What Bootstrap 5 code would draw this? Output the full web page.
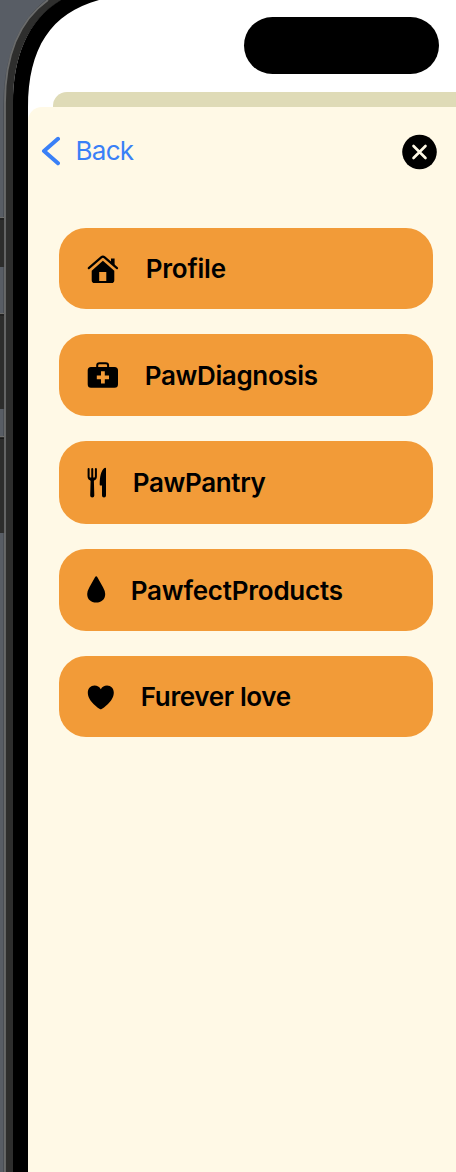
<!DOCTYPE html>
<html lang="en">
<head>
<meta charset="utf-8">
<meta name="viewport" content="width=device-width, initial-scale=1">
<title>Menu</title>
<link href="https://cdn.jsdelivr.net/npm/bootstrap@5.3.0/dist/css/bootstrap.min.css" rel="stylesheet">
<style>
body{font-family:Inter,"Liberation Sans",sans-serif;background:#fff;height:1172px}
.device{height:1172px}
.bezel{z-index:2;pointer-events:none}
.screen{margin-left:28px;height:1172px}
.status-area{height:92px;padding:17px 17px 0 0}
.island{width:195px;height:57px;background:#000}
.sheet-behind{height:15px;margin-left:25px;background:#dfdbb7;border-top-left-radius:14px}
.sheet-wrap{background:#fff}
.sheet{background:#fff9e6;border-top-left-radius:14px}
.sheet-bar{height:121px;padding:27px 19px 0 12px}
.back-link{color:#3a80f7;font-size:26px;line-height:34px;letter-spacing:-.7px}
.back-link span{margin-left:15.500px}
.menu-list{display:grid;grid-template-rows:81px 82px 83px 82px 81px;row-gap:25px;padding:0 22.600px 0 31.300px}
.menu-item{background:#f29b38;border:0;border-radius:27px;font-size:26px;font-weight:600;line-height:32px;color:#000;padding:0 0 0 27.500px;letter-spacing:-.36px}
.menu-item span{padding-top:1.500px}
.fit-wide{letter-spacing:-.23px}
</style>
</head>
<body>
<main class="device position-relative overflow-hidden">
  <svg class="bezel position-absolute top-0 start-0" width="110" height="1172" viewBox="0 0 110 1172" aria-hidden="true">
    <path d="M0 0H50C22 20 5 55 5 103V1172H0Z" fill="#585d65"/>
    <path d="M3.500 1172V110C3.500 55 20 20 46 0" fill="none" stroke="#4a4e54"/>
    <g fill="#2d2d2c">
      <path d="M0 218H5V267H0zM0 313H5V409H0zM0 437H5V533H0z"/>
      <path d="M0 217.500H4M0 313.500H4M0 436.500H4" stroke="#6c6c6a"/>
      <path d="M0 219H4M0 315H4M0 438.500H4" stroke="#191919"/>
    </g>
    <path d="M5 1172V103C5 55 20 20 48 0H62C27 20 13 58 13 103V1172Z" fill="#2e2e2d"/>
    <path d="M5 1172V103C5 55 20 20 48 0" fill="none" stroke="#6a6b6b" stroke-width="1.800"/>
    <path d="M13 1172V103C13 58 27 20 61 0H99C51 13 28 48 28 108V1172Z" fill="#000"/>
  </svg>
  <div class="screen d-flex flex-column">
    <div class="status-area d-flex justify-content-end flex-shrink-0"><div class="island rounded-pill"></div></div>
    <div class="sheet-behind flex-shrink-0"></div>
    <div class="sheet-wrap flex-grow-1 d-flex flex-column">
      <section class="sheet flex-grow-1">
        <header class="sheet-bar d-flex justify-content-between align-items-start">
          <a href="#" class="back-link d-flex text-decoration-none">
            <svg width="20" height="34" viewBox="0 0 20 34" aria-hidden="true"><path d="M18 4.800L4 17L18 29.300" fill="none" stroke="currentColor" stroke-width="4" stroke-linecap="round" stroke-linejoin="round"/></svg><span>Back</span>
          </a>
          <button class="btn p-0 border-0 d-flex" aria-label="Close">
            <svg width="35" height="36" viewBox="0 0 35 36" aria-hidden="true"><circle cx="17.500" cy="18" r="17.300"/><path d="M11.500 12L23.500 24M23.500 12L11.500 24" stroke="#fff9e6" stroke-width="2.600" stroke-linecap="round"/></svg>
          </button>
        </header>
        <nav class="menu-list">
          <button class="menu-item d-flex align-items-center">
            <svg width="32" height="32" viewBox="0 0 32 32" aria-hidden="true"><path d="M1.800 15.200L14.200 4.300Q15.900 2.900 17.600 4.300L30 15.200" fill="none" stroke="#000" stroke-width="2.200" stroke-linecap="round"/><path d="M24 5.500H27.600V13L24 9.800ZM15.900 7.700L27.300 17.700V27.200Q27.300 30 24.500 30H7.500Q4.700 30 4.700 27.200V17.700ZM12.200 19V28H19.300V19Z" fill-rule="evenodd"/></svg>
            <span class="fit-wide" style="margin-left:27px">Profile</span>
          </button>
          <button class="menu-item d-flex align-items-center">
            <svg width="32" height="32" viewBox="0 0 32 32" aria-hidden="true"><path d="M10.200 9V6.500Q10.200 4.200 12.500 4.200H18.800Q21.100 4.200 21.100 6.500V9" fill="none" stroke="#000" stroke-width="2"/><path d="M4 8H27.500Q31 8 31 11.500V25.300Q31 28.800 27.500 28.800H4Q.7 28.800.7 25.300V11.500Q.7 8 4 8ZM14 12.300V16.500H9.800V20.300H14V24.500H17.800V20.300H22V16.500H17.800V12.300Z" fill-rule="evenodd"/></svg>
            <span style="margin-left:26px">PawDiagnosis</span>
          </button>
          <button class="menu-item d-flex align-items-center">
            <svg width="20" height="32" viewBox="0 0 20 32" aria-hidden="true"><path d="M1.600 2V9.500Q1.600 12 4 12.600H6.400Q8.900 12 8.900 9.500V2M5.250 2V13" fill="none" stroke="#000" stroke-width="2" stroke-linecap="round"/><path d="M2 10.500H8.500L6.900 14L7.300 28.500Q7.300 30.500 5.250 30.500T3.200 28.500L3.600 14Z"/><path d="M19 1.300V28.500Q19 30.500 17 30.500T15 28.500V18.500H13.200Q12.700 18.500 12.700 17.500C12.700 10 14 3.500 17.500 1.100Q18.700.4 19 1.300Z"/></svg>
            <span style="margin-left:26px">PawPantry</span>
          </button>
          <button class="menu-item d-flex align-items-center">
            <svg width="19" height="32" viewBox="0 0 19 32" aria-hidden="true"><path d="M8 3.300Q9.200 1.200 10.400 3.300L16 13.200Q18.200 17 18.200 20C18.200 25.500 14.300 28.600 9.200 28.600S.2 25.500.2 20Q.2 17 2.400 13.200Z"/></svg>
            <span class="fit-wide" style="margin-left:25px">PawfectProducts</span>
          </button>
          <button class="menu-item d-flex align-items-center">
            <svg width="28" height="32" viewBox="0 0 28 32" aria-hidden="true"><path d="M13.800 28.300C12.500 28.300.8 20.500.8 11.800C.8 7.500 3.700 4.500 7.500 4.500Q11.700 4.500 13.800 8.200Q15.900 4.500 20 4.500C24 4.500 26.800 7.500 26.800 11.800C26.800 20.500 15.100 28.300 13.800 28.300Z"/></svg>
            <span style="margin-left:26px">Furever love</span>
          </button>
        </nav>
      </section>
    </div>
  </div>
</main>
<script src="https://cdn.jsdelivr.net/npm/bootstrap@5.3.0/dist/js/bootstrap.bundle.min.js"></script>
</body>
</html>
